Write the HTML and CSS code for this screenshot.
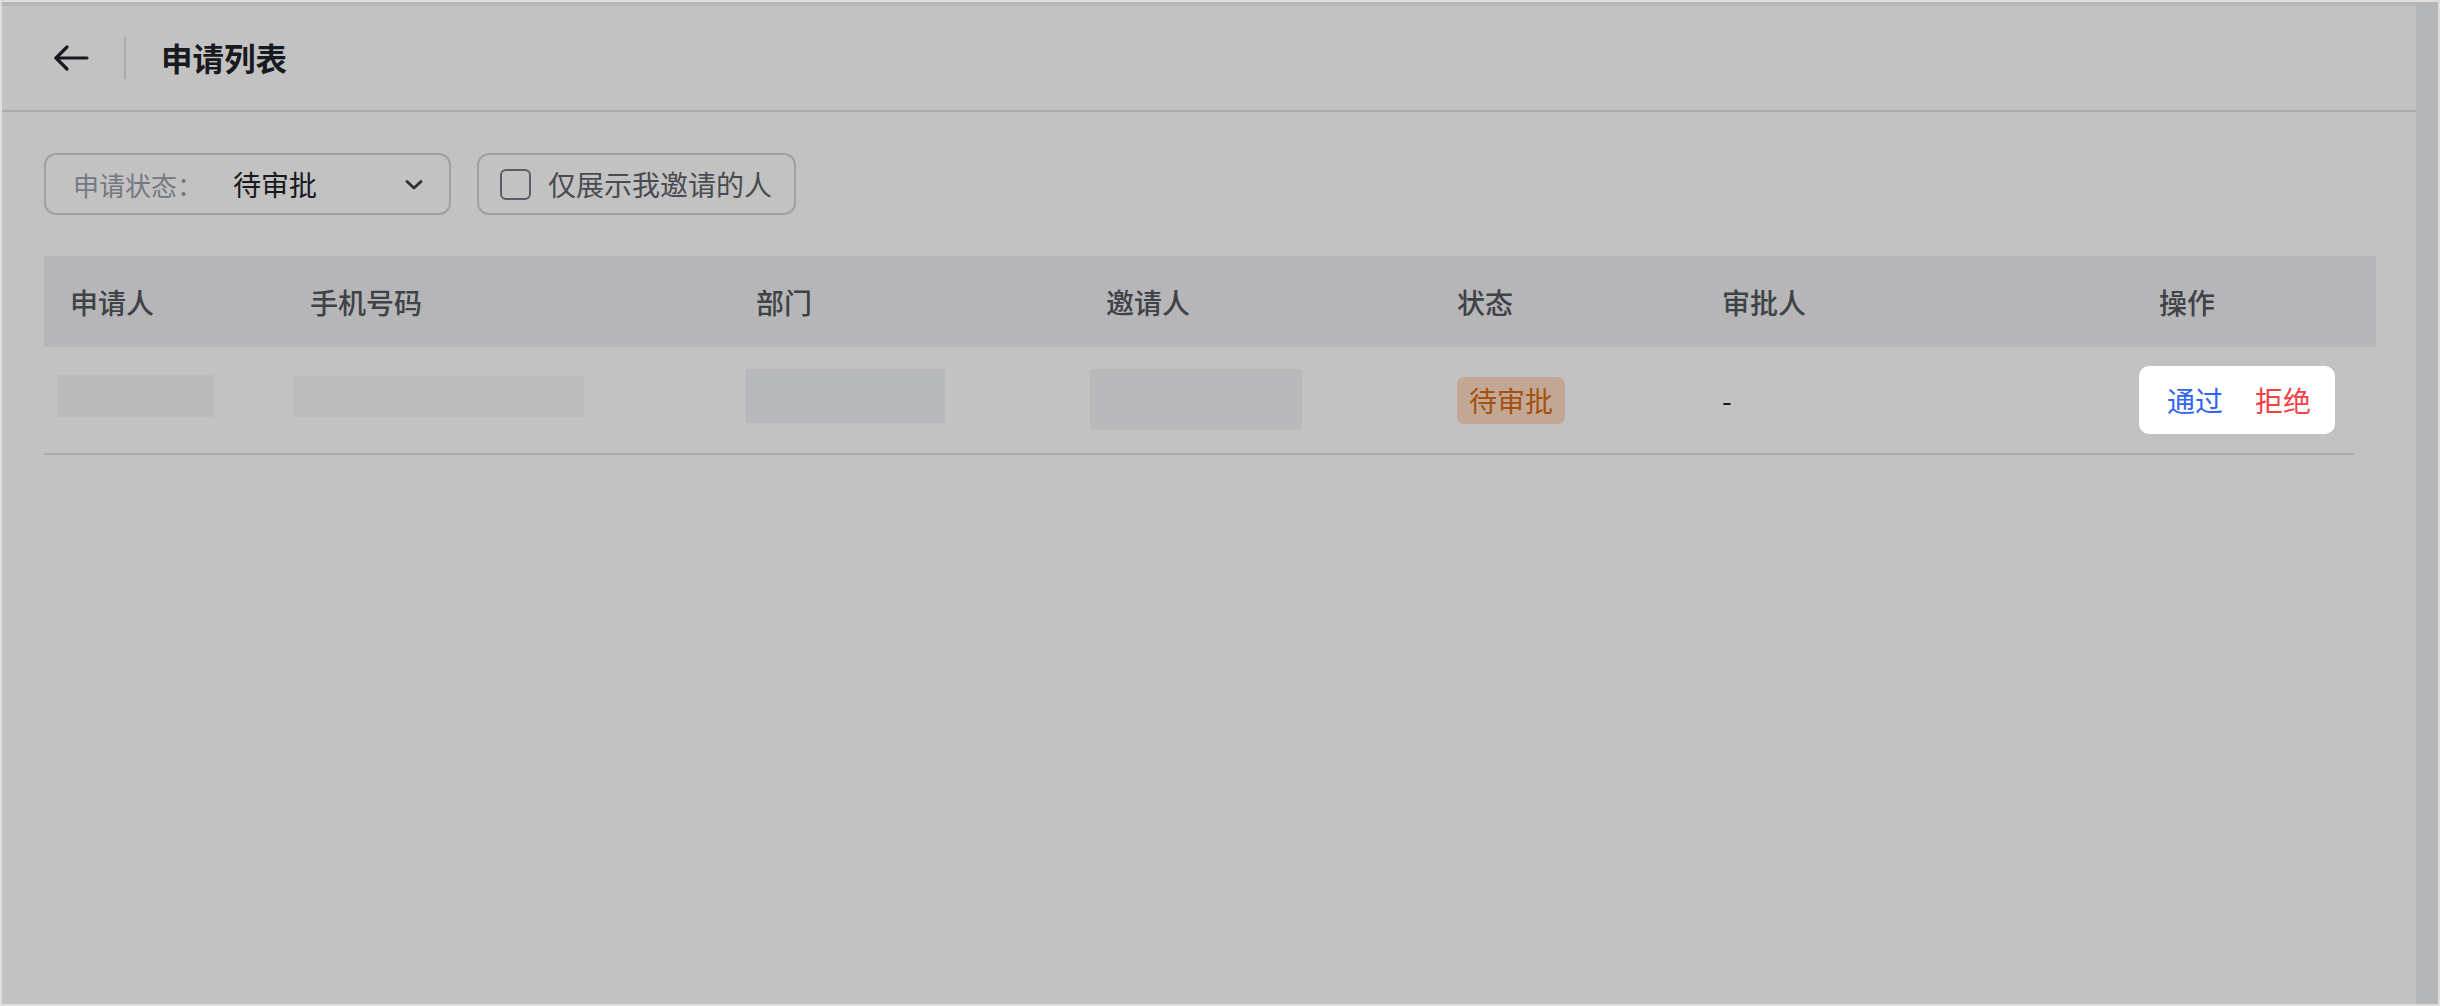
FILE: index.html
```html
<!DOCTYPE html>
<html lang="zh-CN">
<head>
<meta charset="utf-8">
<title>申请列表</title>
<link rel="stylesheet" href="styles.css">
</head>
<body>
<div class="frame">
  <div class="main">
    <header class="topbar">
      <button class="back" aria-label="返回">
        <svg width="36" height="28" viewBox="0 0 36 28" fill="none" stroke="#1f2329" stroke-width="3.2" stroke-linecap="round" stroke-linejoin="round"><path d="M34 14H3"/><path d="M14 3L3 14L14 25"/></svg>
      </button>
      <span class="divider"></span>
      <h1 class="title">申请列表</h1>
    </header>

    <div class="filters">
      <div class="select">
        <span class="select-label">申请状态：</span>
        <span class="select-value">待审批</span>
        <svg class="chevron" width="20" height="13" viewBox="0 0 20 13" fill="none" stroke="#3a3f46" stroke-width="2.8" stroke-linecap="round" stroke-linejoin="round"><path d="M3 3.5L10 10L17 3.5"/></svg>
      </div>
      <label class="check-btn">
        <span class="check-box"></span>
        <span class="check-text">仅展示我邀请的人</span>
      </label>
    </div>

    <div class="table">
      <div class="thead">
        <div class="th">申请人</div>
        <div class="th">手机号码</div>
        <div class="th">部门</div>
        <div class="th">邀请人</div>
        <div class="th">状态</div>
        <div class="th">审批人</div>
        <div class="th">操作</div>
      </div>
      <div class="tr">
        <div class="td"><span class="blur b1"></span></div>
        <div class="td"><span class="blur b2"></span></div>
        <div class="td"><span class="blur b3"></span></div>
        <div class="td"><span class="blur b4"></span></div>
        <div class="td"><span class="tag">待审批</span></div>
        <div class="td"><span class="dash">-</span></div>
        <div class="td td-action">
          <div class="actions">
            <a class="act act-pass">通过</a>
            <a class="act act-reject">拒绝</a>
          </div>
        </div>
      </div>
    </div>
  </div>
  <div class="scrollbar"></div>
  <div class="mask"></div>
</div>
</body>
</html>
```

FILE: styles.css
```css
* { box-sizing: border-box; }

html, body {
  margin: 0;
  padding: 0;
}

body {
  width: 2440px;
  height: 1006px;
  overflow: hidden;
  font-family: "Noto Sans CJK SC", "Noto Sans", sans-serif;
  color: #1f2329;
  background: #ffffff;
}

.frame {
  position: relative;
  width: 2440px;
  height: 1006px;
  border: 2px solid #dedede;
  background: #eeeff2;
  display: flex;
}

.main {
  flex: 1;
  margin-top: 4px;
  background: #ffffff;
  display: flex;
  flex-direction: column;
}

.scrollbar {
  width: 22px;
  flex: none;
  background: #eeeff2;
}

.mask {
  position: absolute;
  inset: 0;
  background: rgba(0, 0, 0, 0.24);
  z-index: 10;
}

/* top bar */
.topbar {
  height: 106px;
  flex: none;
  border-bottom: 2px solid #dee0e3;
  display: flex;
  align-items: center;
  padding-left: 51px;
}

.back {
  border: 0;
  padding: 0;
  background: none;
  width: 36px;
  height: 28px;
  display: flex;
}

.divider {
  width: 2px;
  height: 42px;
  background: #dee0e3;
  margin-left: 35px;
}

.title {
  margin: 0 0 0 35px;
  font-size: 31.5px;
  font-weight: 700;
  line-height: 1;
  color: #1f2329;
}

/* filters */
.filters {
  display: flex;
  gap: 26px;
  margin: 41px 0 0 42px;
}

.select {
  width: 407px;
  height: 62px;
  border: 2px solid #d0d3d6;
  border-radius: 12px;
  display: flex;
  align-items: center;
  padding: 0 25px 0 27px;
}

.select-label {
  width: 160px;
  flex: none;
  font-size: 26px;
  color: #9aa0a8;
}

.select-value {
  flex: 1;
  font-size: 28px;
  color: #1f2329;
}

.chevron { flex: none; }

.check-btn {
  height: 62px;
  border: 2px solid #d0d3d6;
  border-radius: 12px;
  display: flex;
  align-items: center;
  padding: 0 22px 0 21px;
  gap: 17px;
}

.check-box {
  width: 31px;
  height: 31px;
  border: 2px solid #777c84;
  border-radius: 6px;
  background: #fff;
}

.check-text {
  font-size: 28px;
  color: #5f646c;
}

/* table */
.table {
  margin: 41px 40px 0 42px;
  display: flex;
  flex-direction: column;
}

.thead,
.tr {
  display: grid;
  grid-template-columns: 240px 446px 350px 351px 265px 437px 1fr;
}

.thead {
  height: 91px;
  background: #eff0f2;
}

.th {
  display: flex;
  align-items: center;
  padding-left: 26px;
  font-size: 28px;
  font-weight: 500;
  color: #53575e;
}

.tr {
  height: 108px;
  margin-right: 22px;
  border-bottom: 2px solid #dee0e3;
}

.td {
  display: flex;
  align-items: center;
  padding-left: 26px;
  font-size: 28px;
  color: #1f2329;
}

.blur {
  display: block;
  background: #f4f5f8;
}

.b1 { width: 157px; height: 42px; margin-left: -13px; margin-bottom: 8px; background: #f6f6f8; }
.b2 { width: 291px; height: 41px; margin-left: -17px; margin-bottom: 7px; background: #f7f7f9; }
.b3 { width: 199px; height: 54px; margin-left: -10px; margin-bottom: 8px; background: #f1f2f6; }
.b4 { width: 212px; height: 61px; margin-left: -16px; margin-bottom: 1px; background: #f3f4f7; }

.tag {
  height: 47px;
  line-height: 47px;
  padding: 0 12px;
  border-radius: 7px;
  background: #ffddc3;
  color: #d96c14;
  font-size: 28px;
}

.dash {
  font-size: 28px;
  color: #1f2329;
}

.td-action {
  padding-left: 6px;
}

.actions {
  position: relative;
  z-index: 11;
  width: 196px;
  height: 68px;
  background: #ffffff;
  border-radius: 10px;
  display: flex;
  align-items: center;
  gap: 32px;
  padding-left: 28px;
}

.act {
  font-size: 28px;
  cursor: pointer;
}

.act-pass { color: #3064f6; }
.act-reject { color: #f43f45; }
```
